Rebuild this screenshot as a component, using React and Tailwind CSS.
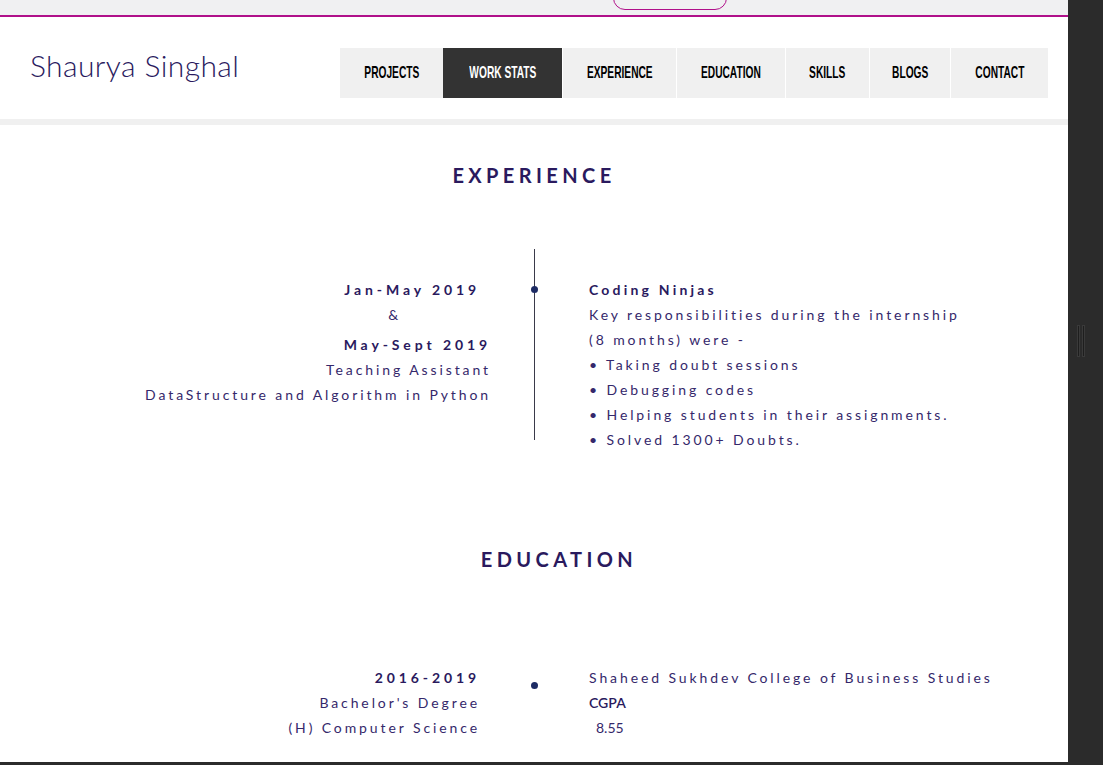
const navItems = ["PROJECTS", "WORK STATS", "EXPERIENCE", "EDUCATION", "SKILLS", "BLOGS", "CONTACT"];
const navWidths = ["w-[103px]", "w-[119px]", "w-[114px]", "w-[109px]", "w-[84px]", "w-[81px]", "w-[98px]"];

const bodyFont = { fontFamily: "Lato, 'Open Sans', sans-serif" };

export default function App() {
	return (
		<div className="flex h-[765px] w-[1103px] overflow-hidden bg-[#2b2b2b]">
			<div className="flex flex-col w-[1068px] h-[762px] bg-white" style={bodyFont}>
				{/* top strip */}
				<div className="relative h-[15px] bg-[#f0f0f2]">
					<div className="absolute left-[613px] top-[-10px] w-[114px] h-[20px] rounded-b-[12px] border border-[#b0108a]"></div>
				</div>
				<div className="h-[2px] bg-[#b0108a]"></div>

				{/* header */}
				<div className="flex items-center h-[102px]">
					<div className="pl-[30px] mb-[6px] text-[30px] font-light text-[#2a1a5e] tracking-[0.4px]">Shaurya Singhal</div>
					<nav
						className="ml-auto mr-[20px] mt-[10px] flex"
						style={{ fontFamily: "'Liberation Sans', Arial, sans-serif" }}
					>
						{navItems.map((item, i) => (
							<div
								key={item}
								className={`${navWidths[i]} h-[50px] flex items-center justify-center text-[17px] font-bold ${
									i > 1 ? "border-l border-white" : ""
								} ${i === 1 ? "bg-[#333333] text-white" : "bg-[#f0f0f0] text-black"}`}
							>
								<span className="inline-block scale-x-[0.6] whitespace-nowrap">{item}</span>
							</div>
						))}
					</nav>
				</div>
				<div className="h-[6px] bg-[#f0f0f0]"></div>

				{/* experience */}
				<h2 className="pt-[38px] text-center text-[20px] leading-[24px] font-bold tracking-[4.4px] text-[#2a1a5e]">
					EXPERIENCE
				</h2>
				<div className="flex items-start mt-[62px] text-[14px] leading-[25px] tracking-[2.9px] text-[#35286b]">
					<div className="w-[491px] pt-[28px] text-right">
						<div className="pr-[11px] font-bold tracking-[3.9px] text-[#2a1a5e]">Jan-May 2019</div>
						<div className="pr-[90px]">&amp;</div>
						<div className="mt-[5px] font-bold tracking-[3.9px] text-[#2a1a5e]">May-Sept 2019</div>
						<div>Teaching Assistant</div>
						<div>DataStructure and Algorithm in Python</div>
					</div>
					<div className="relative ml-[43px] w-px h-[191px] bg-[#3a3a4a]">
						<div className="absolute left-[-3px] top-[37px] w-[7px] h-[7px] rounded-full bg-[#1d2b64]"></div>
					</div>
					<div className="ml-[54px] pt-[28px]">
						<div className="font-bold tracking-[3.2px] text-[#2a1a5e]">Coding Ninjas</div>
						<div>Key responsibilities during the internship</div>
						<div>(8 months) were -</div>
						<div>• Taking doubt sessions</div>
						<div>• Debugging codes</div>
						<div>• Helping students in their assignments.</div>
						<div>• Solved 1300+ Doubts.</div>
					</div>
				</div>

				{/* education */}
				<h2 className="mt-[95px] pl-[50px] text-center text-[20px] leading-[24px] font-bold tracking-[4.4px] text-[#2a1a5e]">
					EDUCATION
				</h2>
				<div className="flex items-start mt-[94px] text-[14px] leading-[25px] tracking-[2.9px] text-[#35286b]">
					<div className="w-[480px] text-right">
						<div className="font-bold tracking-[3.9px] text-[#2a1a5e]">2016-2019</div>
						<div>Bachelor's Degree</div>
						<div>(H) Computer Science</div>
					</div>
					<div className="ml-[51px] mt-[17px] w-[7px] h-[7px] rounded-full bg-[#1d2b64]"></div>
					<div className="ml-[51px]">
						<div>Shaheed Sukhdev College of Business Studies</div>
						<div className="tracking-normal font-semibold text-[#2a1a5e]">CGPA</div>
						<div className="pl-[7px] tracking-normal">8.55</div>
					</div>
				</div>
			</div>

			{/* right scrollbar area */}
			<div className="relative w-[35px] h-[765px] bg-[#2b2b2b]">
				<div className="absolute left-[9px] top-[325px] flex gap-[2px]">
					<div className="w-[3px] h-[32px] bg-[#1e1e1e] border border-[#3a3a3a]"></div>
					<div className="w-[3px] h-[32px] bg-[#1e1e1e] border border-[#3a3a3a]"></div>
				</div>
			</div>
		</div>
	);
}
